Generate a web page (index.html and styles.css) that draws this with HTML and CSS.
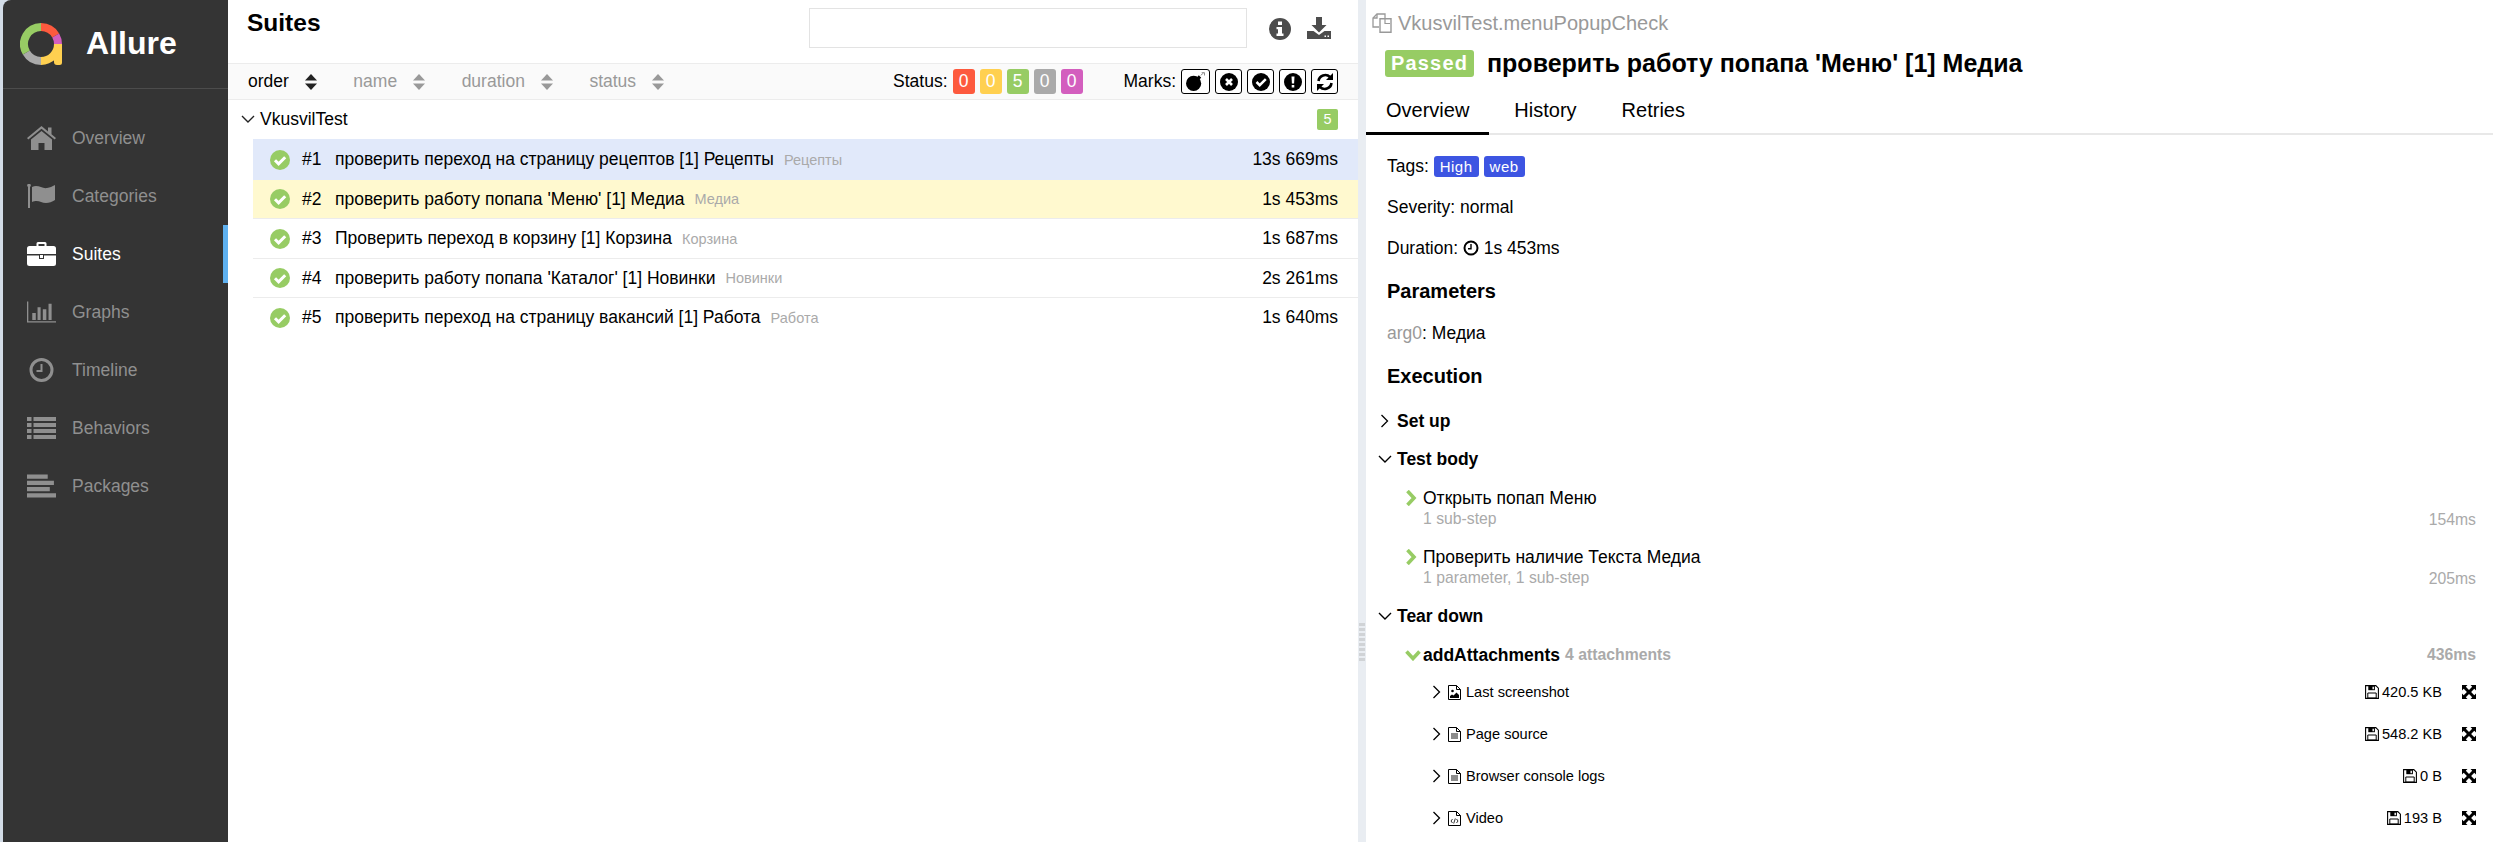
FILE: index.html
```html
<!DOCTYPE html>
<html lang="en">
<head>
<meta charset="utf-8">
<title>Allure</title>
<link rel="stylesheet" href="styles.css">
</head>
<body>
<svg class="defs" xmlns="http://www.w3.org/2000/svg">
  <symbol id="i-check" viewBox="0 0 20 20"><circle cx="10" cy="10" r="10" fill="#97cc64"/><path d="M5 10.300l3.600 3.600L15.200 7.300" fill="none" stroke="#fff" stroke-width="3"/></symbol>
  <symbol id="i-sort" viewBox="0 0 12 16"><path d="M6 0l6 6.500H0z" fill="currentColor"/><path d="M6 16L0 9.500h12z" fill="currentColor"/></symbol>
  <symbol id="i-down" viewBox="0 0 14 9"><path d="M1 1l6 6 6-6" fill="none" stroke="currentColor" stroke-width="1.400"/></symbol>
  <symbol id="i-right" viewBox="0 0 9 14"><path d="M1.500 1l6 6-6 6" fill="none" stroke="currentColor" stroke-width="1.300"/></symbol>
  <symbol id="i-gright" viewBox="0 0 11 16"><path d="M1.500 1l6.500 7-6.500 7" fill="none" stroke="#97cc64" stroke-width="3.600"/></symbol>
  <symbol id="i-gdown" viewBox="0 0 16 11"><path d="M1.500 1.500l6.500 7 6.500-7" fill="none" stroke="#97cc64" stroke-width="3.600"/></symbol>
  <symbol id="i-save" viewBox="0 0 14 14"><path d="M.6.6h10.200l2.600 2.600v10.200H.6z" fill="none" stroke="currentColor" stroke-width="1.100"/><path d="M3.300 1h6.600v4.200H3.300z" fill="currentColor"/><path d="M7.500 1.700h1.400v2.600H7.500z" fill="#fff"/><path d="M2.800 8h8.400v5H2.800z" fill="none" stroke="currentColor"/></symbol>
  <symbol id="i-expand" viewBox="0 0 14 14"><path d="M0 0h5.500L3.800 1.700 7 4.900l3.200-3.200L8.500 0H14v5.500l-1.700-1.700L9.100 7l3.200 3.200 1.700-1.700V14H8.500l1.700-1.700L7 9.100l-3.200 3.200L5.500 14H0V8.500l1.700 1.700L4.900 7 1.700 3.800 0 5.500z"/></symbol>
  <symbol id="i-file" viewBox="0 0 13 15"><path d="M.5.5h8l4 4v10H.5z" fill="#fff" stroke="currentColor"/><path d="M8.500.5v4h4" fill="none" stroke="currentColor"/><path d="M3 7h7M3 9h7M3 11h7" stroke="currentColor" stroke-width=".9"/></symbol>
</svg>
<div class="app">
  <aside class="sidebar">
    <div class="brand">
      <svg class="logo" viewBox="0 0 42 42" xmlns="http://www.w3.org/2000/svg">
        <path d="M21 4A17 17 0 0 1 35.700 12.500" fill="none" stroke="#fd5a3e" stroke-width="8"/>
        <path d="M35.700 12.500A17 17 0 0 1 38 21" fill="none" stroke="#d35ebe" stroke-width="8"/>
        <path d="M38 21A17 17 0 0 1 21 38" fill="none" stroke="#ffd050" stroke-width="8"/>
        <path d="M21 38A17 17 0 0 1 6.300 29.500" fill="none" stroke="#aaa" stroke-width="8"/>
        <path d="M6.300 29.500A17 17 0 0 1 21 4" fill="none" stroke="#97cc64" stroke-width="8"/>
        <path d="M42 21v18.500a2.500 2.500 0 0 1-2.500 2.500H37a3 3 0 0 1-3-3V21z" fill="#ffd050"/>
      </svg>
      <span class="brand-name">Allure</span>
    </div>
    <nav class="nav">
      <a class="nav-item"><svg class="nav-icon" viewBox="0 0 29 24" xmlns="http://www.w3.org/2000/svg"><path d="M14.500 0L0 12l1.300 1.600L14.500 2.800l13.200 10.800L29 12l-4.500-3.700V1.500h-3.500v3.900z"/><path d="M14.500 5L4 13.600V24h7.500v-7h6v7H25V13.600z"/></svg><span>Overview</span></a>
      <a class="nav-item"><svg class="nav-icon" viewBox="0 0 29 24" xmlns="http://www.w3.org/2000/svg"><path d="M1 0h2v24H1z"/><circle cx="2" cy="1.500" r="1.800"/><path d="M5 3c6-3 10 2 15 1 3-.5 5-1.500 8-3v15c-3 2-6 3-9 3-5 0-8-4-14-1z"/></svg><span>Categories</span></a>
      <a class="nav-item is-active"><svg class="nav-icon" viewBox="0 0 29 24" xmlns="http://www.w3.org/2000/svg"><path d="M9.500 4V1.500A1.500 1.500 0 0 1 11 0h7a1.500 1.500 0 0 1 1.500 1.500V4h7A2.500 2.500 0 0 1 29 6.500V12H0V6.500A2.500 2.500 0 0 1 2.500 4zm2-2v2h6V2z" fill-rule="evenodd"/><path d="M0 13.500h12V17h5v-3.500h12v8A2.500 2.500 0 0 1 26.500 24h-24A2.500 2.500 0 0 1 0 21.500z"/><path d="M13 13h3v3h-3z"/></svg><span>Suites</span></a>
      <a class="nav-item"><svg class="nav-icon" viewBox="0 0 33 24" xmlns="http://www.w3.org/2000/svg"><path d="M0 0h1.500v22.500H33V24H0z"/><path d="M6 13h4v8H6zM12 6.500h3.500V21H12zM18 9h4v12h-4zM24.500 2.500H28V21h-3.500z"/></svg><span>Graphs</span></a>
      <a class="nav-item"><svg class="nav-icon" viewBox="0 0 25 24" xmlns="http://www.w3.org/2000/svg"><path d="M12.500 0a12 12 0 1 1 0 24 12 12 0 0 1 0-24zm0 3a9 9 0 1 0 0 18 9 9 0 0 0 0-18z" fill-rule="evenodd"/><path d="M11.500 6h2v8H7.500v-2h4z"/></svg><span>Timeline</span></a>
      <a class="nav-item"><svg class="nav-icon" viewBox="0 0 29 22" xmlns="http://www.w3.org/2000/svg"><path d="M0 0h4.500v4H0zM6.500 0H29v4H6.500zM0 6h4.500v4H0zM6.500 6H29v4H6.500zM0 12h4.500v4H0zM6.500 12H29v4H6.500zM0 18h4.500v4H0zM6.500 18H29v4H6.500z"/></svg><span>Behaviors</span></a>
      <a class="nav-item"><svg class="nav-icon" viewBox="0 0 28 22" xmlns="http://www.w3.org/2000/svg"><path d="M0 0h20v4H0zM0 6h26v4H0zM0 12h22v4H0zM0 18h28v4H0z"/></svg><span>Packages</span></a>
    </nav>
  </aside>

  <main class="suites">
    <header class="suites-head">
      <h1 class="pane-title">Suites</h1>
      <input class="search" type="text" aria-label="Search">
      <svg class="head-icon" viewBox="0 0 22 22" xmlns="http://www.w3.org/2000/svg"><path fill-rule="evenodd" d="M11 0a11 11 0 1 1 0 22 11 11 0 0 1 0-22zM9 3.500v3.500h4V3.500zM7.500 9v2.200H9v4.300H7.500V18h7v-2.500H13V9z"/></svg>
      <svg class="head-icon head-icon-dl" viewBox="0 0 24 22" xmlns="http://www.w3.org/2000/svg"><path d="M9 0h6v8h4.500L12 15.500 4.500 8H9z"/><path fill-rule="evenodd" d="M0 14h6.500l5.500 4 5.500-4H24v8H0zM17.500 18.500v1.500h1.500v-1.500zM20.500 18.500v1.500H22v-1.500z"/></svg>
    </header>
    <div class="toolbar">
      <div class="sorters">
        <span class="sorter is-current">order<svg class="sort-icon"><use href="#i-sort"/></svg></span>
        <span class="sorter">name<svg class="sort-icon"><use href="#i-sort"/></svg></span>
        <span class="sorter">duration<svg class="sort-icon"><use href="#i-sort"/></svg></span>
        <span class="sorter">status<svg class="sort-icon"><use href="#i-sort"/></svg></span>
      </div>
      <div class="filters">
        <span class="filter-label">Status:</span>
        <span class="pill pill-red">0</span>
        <span class="pill pill-yellow">0</span>
        <span class="pill pill-green">5</span>
        <span class="pill pill-gray">0</span>
        <span class="pill pill-purple">0</span>
      </div>
      <div class="marks">
        <span class="filter-label">Marks:</span>
        <span class="mark mark-wide"><svg class="mark-icon" viewBox="0 0 22 20" xmlns="http://www.w3.org/2000/svg"><circle cx="9" cy="12" r="8"/><path d="M12.500 5.500l2-2 2.500 2.500-2 2z"/><path d="M16.500 3.500l3-2.500M17.500 .7h3v3" fill="none" stroke="#888" stroke-width="1"/></svg></span>
        <span class="mark"><svg class="mark-icon" viewBox="0 0 18 18" xmlns="http://www.w3.org/2000/svg"><circle cx="9" cy="9" r="9"/><path d="M6 6l6 6M12 6l-6 6" stroke="#fff" stroke-width="2.600"/></svg></span>
        <span class="mark"><svg class="mark-icon" viewBox="0 0 18 18" xmlns="http://www.w3.org/2000/svg"><circle cx="9" cy="9" r="9"/><path d="M4.500 9l3.200 3.200L13.800 6.200" fill="none" stroke="#fff" stroke-width="2.500"/></svg></span>
        <span class="mark"><svg class="mark-icon" viewBox="0 0 18 18" xmlns="http://www.w3.org/2000/svg"><circle cx="9" cy="9" r="9"/><path d="M7.500 3.500h3l-.4 7H7.900zM7.700 12h2.600v2.500H7.700z" fill="#fff"/></svg></span>
        <span class="mark"><svg class="mark-icon" viewBox="0 0 18 18" xmlns="http://www.w3.org/2000/svg"><path d="M2.500 8A6.800 6.800 0 0 1 14 4" fill="none" stroke="#000" stroke-width="2.600"/><path d="M17 0v7h-7z"/><path d="M15.500 10A6.800 6.800 0 0 1 4 14" fill="none" stroke="#000" stroke-width="2.600"/><path d="M1 18v-7h7z"/></svg></span>
      </div>
    </div>
    <div class="group-head">
      <svg class="group-chevron"><use href="#i-down"/></svg>
      <span class="group-name">VkusvilTest</span>
      <span class="group-count">5</span>
    </div>
    <ul class="rows">
      <li class="row row-hover"><svg class="row-status"><use href="#i-check"/></svg><span class="row-order">#1</span><span class="row-name">проверить переход на страницу рецептов [1] Рецепты</span><span class="row-param">Рецепты</span><span class="row-time">13s 669ms</span></li>
      <li class="row row-selected"><svg class="row-status"><use href="#i-check"/></svg><span class="row-order">#2</span><span class="row-name">проверить работу попапа 'Меню' [1] Медиа</span><span class="row-param">Медиа</span><span class="row-time">1s 453ms</span></li>
      <li class="row row-tall"><svg class="row-status"><use href="#i-check"/></svg><span class="row-order">#3</span><span class="row-name">Проверить переход в корзину [1] Корзина</span><span class="row-param">Корзина</span><span class="row-time">1s 687ms</span></li>
      <li class="row"><svg class="row-status"><use href="#i-check"/></svg><span class="row-order">#4</span><span class="row-name">проверить работу попапа 'Каталог' [1] Новинки</span><span class="row-param">Новинки</span><span class="row-time">2s 261ms</span></li>
      <li class="row row-last"><svg class="row-status"><use href="#i-check"/></svg><span class="row-order">#5</span><span class="row-name">проверить переход на страницу вакансий [1] Работа</span><span class="row-param">Работа</span><span class="row-time">1s 640ms</span></li>
    </ul>
  </main>

  <div class="splitter"><span class="grip"></span></div>

  <section class="detail">
    <div class="full-name">
      <svg class="copy-icon" viewBox="0 0 20 20" xmlns="http://www.w3.org/2000/svg"><path d="M13 5V1H5L1 5v9h6" fill="none" stroke="#999" stroke-width="1.300"/><path d="M5 1v4H1" fill="none" stroke="#999" stroke-width="1.300"/><path d="M8 5.700h11v13.600H8z" fill="none" stroke="#999" stroke-width="1.400"/><path d="M13 5.500v5h5" fill="none" stroke="#999" stroke-width="1.200"/></svg>
      <span>VkusvilTest.menuPopupCheck</span>
    </div>
    <div class="title-line">
      <span class="status-badge">Passed</span>
      <h2 class="test-title">проверить работу попапа 'Меню' [1] Медиа</h2>
    </div>
    <div class="tabs">
      <span class="tab is-active">Overview</span>
      <span class="tab">History</span>
      <span class="tab">Retries</span>
    </div>
    <div class="overview">
      <div class="meta meta-tags">Tags: <span class="tag">High</span><span class="tag">web</span></div>
      <div class="meta">Severity: normal</div>
      <div class="meta">Duration: <svg class="dur-icon" viewBox="0 0 16 16" xmlns="http://www.w3.org/2000/svg"><circle cx="8" cy="8" r="6.500" fill="none" stroke="#000" stroke-width="2"/><path d="M8 4v4.800H5" fill="none" stroke="#000" stroke-width="1.400"/></svg> 1s 453ms</div>
      <h3 class="section-title section-params">Parameters</h3>
      <div class="meta"><span class="param-key">arg0</span>: Медиа</div>
      <h3 class="section-title section-exec">Execution</h3>

      <div class="stage"><svg class="stage-chevron stage-chevron-r"><use href="#i-right"/></svg>Set up</div>
      <div class="stage"><svg class="stage-chevron"><use href="#i-down"/></svg>Test body</div>
      <div class="step">
        <svg class="step-chevron"><use href="#i-gright"/></svg>
        <div class="step-main"><div class="step-name">Открыть попап Меню</div><div class="step-sub">1 sub-step</div></div>
        <span class="step-time">154ms</span>
      </div>
      <div class="step">
        <svg class="step-chevron"><use href="#i-gright"/></svg>
        <div class="step-main"><div class="step-name">Проверить наличие Текста Медиа</div><div class="step-sub">1 parameter, 1 sub-step</div></div>
        <span class="step-time">205ms</span>
      </div>
      <div class="stage stage-teardown"><svg class="stage-chevron"><use href="#i-down"/></svg>Tear down</div>
      <div class="step-open">
        <svg class="step-open-chevron"><use href="#i-gdown"/></svg>
        <span class="step-open-name">addAttachments</span>
        <span class="step-open-count">4 attachments</span>
        <span class="step-open-time">436ms</span>
      </div>
      <div class="att">
        <svg class="att-chevron"><use href="#i-right"/></svg>
        <svg class="att-file" viewBox="0 0 13 15" xmlns="http://www.w3.org/2000/svg"><path d="M.5.5h8l4 4v10H.5z" fill="#fff" stroke="#000"/><path d="M8.500.5v4h4" fill="none" stroke="#000"/><circle cx="4.500" cy="6" r="1.300"/><path d="M2 13v-2l2-1.500 1.500 1 3-3L11 10v3z"/></svg>
        <span class="att-name">Last screenshot</span>
        <svg class="att-save"><use href="#i-save"/></svg><span class="att-size">420.5 KB</span>
        <svg class="att-expand"><use href="#i-expand"/></svg>
      </div>
      <div class="att">
        <svg class="att-chevron"><use href="#i-right"/></svg>
        <svg class="att-file"><use href="#i-file"/></svg>
        <span class="att-name">Page source</span>
        <svg class="att-save"><use href="#i-save"/></svg><span class="att-size">548.2 KB</span>
        <svg class="att-expand"><use href="#i-expand"/></svg>
      </div>
      <div class="att">
        <svg class="att-chevron"><use href="#i-right"/></svg>
        <svg class="att-file"><use href="#i-file"/></svg>
        <span class="att-name">Browser console logs</span>
        <svg class="att-save"><use href="#i-save"/></svg><span class="att-size">0 B</span>
        <svg class="att-expand"><use href="#i-expand"/></svg>
      </div>
      <div class="att">
        <svg class="att-chevron"><use href="#i-right"/></svg>
        <svg class="att-file" viewBox="0 0 13 15" xmlns="http://www.w3.org/2000/svg"><path d="M.5.5h8l4 4v10H.5z" fill="#fff" stroke="#000"/><path d="M8.500.5v4h4" fill="none" stroke="#000"/><path d="M4.500 8L3 10l1.500 2M8.500 8l1.500 2-1.500 2M7.300 7.500l-1.600 5" fill="none" stroke="#000" stroke-width=".8"/></svg>
        <span class="att-name">Video</span>
        <svg class="att-save"><use href="#i-save"/></svg><span class="att-size">193 B</span>
        <svg class="att-expand"><use href="#i-expand"/></svg>
      </div>
    </div>
  </section>
</div>
</body>
</html>
```

FILE: styles.css
```css
* { box-sizing: border-box; }

html, body {
  margin: 0;
  height: 100%;
  overflow: hidden;
  background: #fff;
  color: #000;
  font-family: "Liberation Sans", Arial, sans-serif;
  font-size: 17.5px;
}

.defs { display: none; }

.app {
  display: flex;
  height: 842px;
  padding-left: 3px;
  background: #d3dce7;
}

/* Sidebar */
.sidebar {
  flex: 0 0 225px;
  background: #343434;
  border-top-left-radius: 8px;
  color: #999;
}

.brand {
  display: flex;
  align-items: center;
  height: 89px;
  padding: 0 0 0 17px;
  border-bottom: 1px solid #4c4c4c;
}

.logo {
  flex: none;
  width: 42px;
  height: 42px;
}

.brand-name {
  margin-left: 24px;
  margin-top: -1px;
  color: #fff;
  font-size: 32px;
  font-weight: 700;
}

.nav { padding-top: 20px; }

.nav-item {
  display: flex;
  align-items: center;
  height: 58px;
  padding-left: 24px;
  color: #8f8f8f;
}

.nav-item.is-active {
  color: #fff;
  border-right: 5px solid #5fb1f0;
}

.nav-icon {
  flex: none;
  width: 29px;
  height: 24px;
  margin-right: 16px;
  fill: currentColor;
}

/* Suites pane */
.suites {
  flex: 0 0 1130px;
  min-width: 0;
  background: #fff;
}

.suites-head {
  display: flex;
  align-items: flex-start;
  height: 64px;
  padding-left: 19px;
  border-bottom: 1px solid #ececec;
}

.pane-title {
  margin: 9px 0 0;
  font-size: 24.5px;
  line-height: 28px;
  font-weight: 700;
}

.search {
  width: 438px;
  height: 40px;
  margin: 8px 0 0 auto;
  border: 1px solid #e3e3e3;
  background: #fff;
}

.head-icon {
  width: 22px;
  height: 22px;
  margin: 18px 0 0 22px;
  fill: #4d4d4d;
}

.head-icon-dl {
  width: 24px;
  margin: 17px 27px 0 16px;
}

.toolbar {
  display: flex;
  align-items: center;
  height: 36px;
  padding-left: 20px;
  padding-right: 20px;
  background: #fafafa;
  border-bottom: 1px solid #ececec;
}

.sorters {
  display: flex;
  flex: 1;
  align-items: center;
  color: #999;
}

.sorter {
  display: flex;
  align-items: center;
  margin-right: 36.5px;
}

.sorter.is-current { color: #000; }

.sort-icon {
  width: 12px;
  height: 16px;
  margin-left: 16px;
  color: #999;
}

.sorter.is-current .sort-icon { color: #222; }

.filters,
.marks {
  display: flex;
  align-items: center;
}

.filters { margin-right: 41px; }

.filter-label { margin-right: 5px; }

.pill {
  width: 22px;
  height: 25px;
  margin-right: 5px;
  border-radius: 3px;
  color: #fff;
  font-size: 17.5px;
  line-height: 25px;
  text-align: center;
}

.pill:last-child { margin-right: 0; }

.pill-red { background: #fd5a3e; }
.pill-yellow { background: #ffd050; }
.pill-green { background: #97cc64; }
.pill-gray { background: #aaa; }
.pill-purple { background: #d35ebe; }

.mark {
  display: flex;
  align-items: center;
  justify-content: center;
  width: 27px;
  height: 25px;
  margin-left: 5px;
  border: 1px solid #000;
  border-radius: 3px;
  background: #fff;
}

.mark:nth-child(2) { margin-left: 0; }
.mark-wide { width: 29px; }

.mark-icon {
  width: 18px;
  height: 18px;
}

.mark-wide .mark-icon {
  width: 21px;
  height: 19px;
}

.group-head {
  display: flex;
  align-items: center;
  height: 39px;
  padding: 0 20px 0 13px;
}

.group-chevron {
  width: 14px;
  height: 9px;
  color: #222;
}

.group-name {
  margin-left: 5px;
  flex: 1;
}

.group-count {
  width: 21px;
  height: 21px;
  border-radius: 2px;
  background: #97cc64;
  color: #fff;
  font-size: 14.5px;
  line-height: 21px;
  text-align: center;
}

.rows {
  margin: 0 0 0 25px;
  padding: 0;
  list-style: none;
}

.row {
  display: flex;
  align-items: center;
  height: 39px;
  padding: 0 20px 0 17px;
  border-bottom: 1px solid #ececec;
}

.row-hover {
  height: 41px;
  background: #e1e9fa;
  border-bottom: 0;
}

.row-selected { background: #fff9cf; }
.row-tall { height: 40px; }
.row-last { border-bottom: 0; }

.row-status {
  flex: none;
  width: 20px;
  height: 20px;
}

.row-order {
  width: 33px;
  margin-left: 12px;
}

.row-name { white-space: nowrap; }

.row-param {
  margin-left: 10px;
  color: #aaa;
  font-size: 14.5px;
}

.row-time { margin-left: auto; }

/* Splitter */
.splitter {
  flex: 0 0 8px;
  background: #e9edf2;
  padding: 623px 1px 0;
}

.grip {
  display: block;
  height: 38px;
  background-image: repeating-linear-gradient(to right, #d0d3d6 0 3px, transparent 3px);
  -webkit-mask-image: repeating-linear-gradient(to bottom, #000 0 3px, transparent 3px 5px);
  mask-image: repeating-linear-gradient(to bottom, #000 0 3px, transparent 3px 5px);
}

/* Detail pane */
.detail {
  flex: 1;
  min-width: 0;
  background: #fff;
}

.full-name {
  display: flex;
  align-items: center;
  height: 20px;
  margin: 13px 0 0 6px;
  color: #999;
  font-size: 20px;
}

.copy-icon {
  width: 20px;
  height: 20px;
  margin-right: 6px;
}

.title-line {
  display: flex;
  align-items: center;
  margin: 17px 0 0 19px;
  height: 27px;
}

.status-badge {
  width: 89px;
  height: 27px;
  border-radius: 3px;
  background: #97cc64;
  color: #fff;
  font-size: 20px;
  font-weight: 700;
  letter-spacing: 1.2px;
  line-height: 27px;
  text-align: center;
}

.test-title {
  margin: 0 0 0 13px;
  font-size: 25px;
  font-weight: 700;
}

.tabs {
  display: flex;
  height: 58px;
  padding-top: 20px;
  border-bottom: 2px solid #e8e8e8;
}

.tab {
  height: 38px;
  padding: 0 20px;
  font-size: 20px;
  line-height: 26px;
  margin-right: 5px;
}

.tab.is-active { border-bottom: 3px solid #000; }

.overview { padding: 0 17px 0 21px; }

.meta {
  height: 41px;
  line-height: 41px;
}

.meta-tags {
  display: flex;
  align-items: center;
  margin-top: 11px;
  white-space: pre;
}

.tag {
  height: 21px;
  margin-right: 5px;
  padding: 0 6px;
  border-radius: 3px;
  background: #3d55e2;
  color: #fff;
  font-size: 15px;
  letter-spacing: .5px;
  line-height: 21px;
}

.dur-icon {
  width: 16px;
  height: 16px;
  vertical-align: -2px;
}

.section-title {
  margin: 0;
  font-size: 20px;
  font-weight: 700;
  line-height: 45px;
}

.section-params { height: 44px; }
.section-exec { height: 48px; }

.param-key { color: #999; }

.stage {
  display: flex;
  align-items: center;
  height: 38px;
  margin-left: -9px;
  font-weight: 700;
}

.stage-teardown {
  height: 39px;
  padding-top: 1px;
  margin-bottom: 1px;
}

.stage-chevron {
  flex: none;
  width: 14px;
  height: 9px;
  margin-right: 5px;
  color: #000;
}

.stage-chevron-r {
  width: 9px;
  height: 14px;
  margin-left: 2px;
  margin-right: 8px;
}

.step {
  display: flex;
  align-items: flex-start;
  height: 59px;
  padding-top: 10px;
  margin-left: 19px;
}

.step-chevron {
  flex: none;
  width: 11px;
  height: 16px;
  margin: 2px 6px 0 0;
}

.step-main { flex: 1; }

.step-name { line-height: 20px; }

.step-sub {
  color: #aaa;
  font-size: 15.75px;
  line-height: 22px;
}

.step-time {
  margin-top: 21px;
  color: #aaa;
  font-size: 15.75px;
  line-height: 22px;
}

.step-open {
  display: flex;
  align-items: center;
  height: 38px;
  margin-bottom: -3px;
  margin-left: 18px;
}

.step-open-chevron {
  flex: none;
  width: 16px;
  height: 11px;
  margin-right: 2px;
}

.step-open-name { font-weight: 700; }

.step-open-count {
  flex: 1;
  margin-left: 5px;
  color: #aaa;
  font-size: 15.75px;
  font-weight: 700;
}

.step-open-time {
  color: #aaa;
  font-size: 15.75px;
  font-weight: 700;
}

.att {
  display: flex;
  align-items: center;
  height: 42px;
  margin-left: 45px;
  font-size: 14.6px;
}

.att-chevron {
  flex: none;
  width: 9px;
  height: 14px;
  margin-right: 7px;
  color: #000;
}

.att-file {
  flex: none;
  width: 13px;
  height: 15px;
  margin-right: 5px;
  color: #000;
}

.att-name { flex: 1; }

.att-save {
  flex: none;
  width: 14px;
  height: 14px;
  margin-right: 3px;
  color: #000;
}

.att-size { white-space: nowrap; }

.att-expand {
  flex: none;
  width: 14px;
  height: 14px;
  margin-left: 20px;
  fill: #000;
}
```
